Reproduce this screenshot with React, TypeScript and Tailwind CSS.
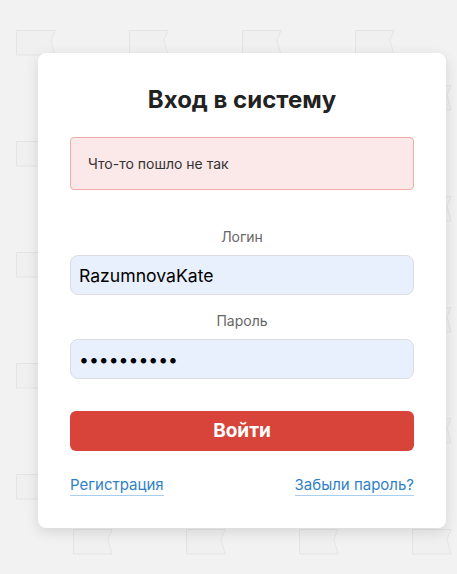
import { useState } from "react";

function FlagPattern() {
  return (
    <svg className="absolute inset-0 h-full w-full" aria-hidden="true">
      <defs>
        <pattern id="flags" width="113" height="111" patternUnits="userSpaceOnUse" x="16" y="30">
          <path d="M0.5 0.5H39L35 10L39 25H0.5Z" fill="#f0f0f0" stroke="#e4e4e4" strokeWidth="1" />
          <path
            d="M57.5 55.5H96L92 65L96 80H57.5Z"
            fill="#f0f0f0"
            stroke="#e4e4e4"
            strokeWidth="1"
          />
        </pattern>
      </defs>
      <rect width="100%" height="100%" fill="url(#flags)" />
    </svg>
  );
}

export default function App() {
  const [login, setLogin] = useState("RazumnovaKate");
  const [password, setPassword] = useState("qwerty1234");

  return (
    <div className="relative min-h-screen overflow-hidden bg-[#f2f2f2] font-['Inter',sans-serif]">
      <FlagPattern />
      <div className="relative pl-[38px] pt-[53px]">
        <form
          className="flex w-[408px] flex-col rounded-lg bg-white px-8 pb-8 pt-[33px] shadow-[0_4px_14px_rgba(0,0,0,0.12)]"
          onSubmit={(e) => e.preventDefault()}
        >
          <h1 className="text-center text-[24px] font-bold leading-7 text-[#222]">Вход в систему</h1>

          <div className="mt-[23px] flex h-[53px] items-center rounded border border-[#f2aaa6] bg-[#fbe8e8] px-[17px] text-sm text-[#333]">
            Что-то пошло не так
          </div>

          <label className="mt-[37px] text-center text-sm leading-5 text-[#666]" htmlFor="login">
            Логин
          </label>
          <input
            id="login"
            value={login}
            onChange={(e) => setLogin(e.target.value)}
            className="mt-2 h-10 rounded-lg border border-[#dadde2] bg-[#e8f0fe] px-2 text-[17.6px] text-black outline-none"
          />

          <label className="mt-4 text-center text-sm leading-5 text-[#666]" htmlFor="password">
            Пароль
          </label>
          <input
            id="password"
            type="password"
            value={password}
            onChange={(e) => setPassword(e.target.value)}
            className="mt-2 h-10 rounded-lg border border-[#dadde2] bg-[#e8f0fe] px-2 text-[17.6px] text-black outline-none"
          />

          <button
            type="submit"
            className="mt-8 h-10 rounded-md bg-[#d84439] text-[19px] font-bold text-white"
          >
            Войти
          </button>

          <div className="mt-6 flex items-center justify-between text-[15px] leading-5 text-[#2f7fc8]">
            <a href="#" className="border-b border-[#a9cfee]">
              Регистрация
            </a>
            <a href="#" className="border-b border-[#a9cfee]">
              Забыли пароль?
            </a>
          </div>
        </form>
      </div>
    </div>
  );
}
